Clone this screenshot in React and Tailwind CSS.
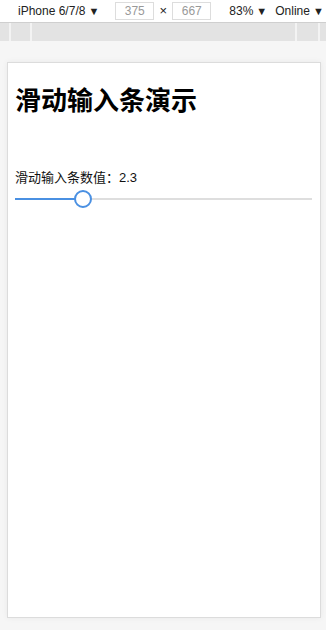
import { useState } from 'react'

const font = { fontFamily: '"Liberation Sans", "Noto Sans CJK SC", sans-serif' }

function Caret() {
  return <span className="text-[11px] ml-[3px] leading-none">▼</span>
}

export default function App() {
  const [value] = useState(2.3)
  const pct = (value / 10) * 100

  return (
    <div className="w-[326px] h-[630px] bg-[#f6f6f6] flex flex-col overflow-hidden" style={font}>
      {/* devtools toolbar */}
      <div className="h-[23px] bg-white border-b border-[#cfcfcf] flex items-center text-[12px] text-[#222] shrink-0">
        <div className="ml-[18px] flex items-center">iPhone 6/7/8<Caret /></div>
        <div className="ml-[16px] w-[39px] h-[18px] border border-[#ddd] text-[#999] flex items-center justify-center">375</div>
        <div className="w-[18px] text-center text-[13px]">×</div>
        <div className="w-[39px] h-[18px] border border-[#ddd] text-[#999] flex items-center justify-center">667</div>
        <div className="ml-[18px] flex items-center">83%<Caret /></div>
        <div className="ml-[8px] flex items-center">Online<Caret /></div>
      </div>

      {/* media query bar */}
      <div className="h-[18px] bg-[#e3e3e3] flex shrink-0">
        <div className="w-[9px]" />
        <div className="w-[23px] border-l-2 border-r-2 border-[#f3f3f3]" />
        <div className="flex-1" />
        <div className="w-[25px] border-l-2 border-r-2 border-[#f3f3f3]" />
        <div className="w-[6px]" />
      </div>

      {/* device viewport */}
      <div className="flex-1 pt-[21px] pb-[12px] pl-[7px] pr-[5px]">
        <div className="h-full bg-white border border-[#dcdcdc] shadow-[0_0_6px_rgba(0,0,0,0.06)] px-[7px] pt-[17px]">
          <h1 className="text-[26px] font-bold text-black leading-[42px]">滑动输入条演示</h1>
          <p className="mt-[47px] text-[13px] text-[#111] leading-[18px]">滑动输入条数值：{value}</p>
          <div className="relative mt-[3px] h-[18px] mr-[1px]">
            <div className="absolute left-0 right-0 top-[8px] h-[2px] bg-[#dedede]" />
            <div className="absolute left-0 top-[8px] h-[2px] bg-[#4a90e2]" style={{ width: `${pct}%` }} />
            <div
              className="absolute top-0 w-[18px] h-[18px] -ml-[9px] rounded-full bg-white border-2 border-[#4a90e2]"
              style={{ left: `${pct}%` }}
            />
          </div>
        </div>
      </div>
    </div>
  )
}
